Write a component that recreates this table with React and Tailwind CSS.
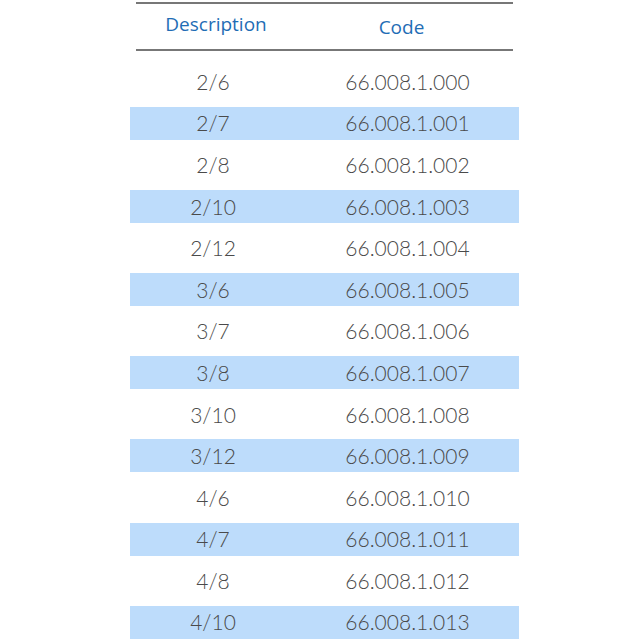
const ROWS = [
  ["2/6", "66.008.1.000"],
  ["2/7", "66.008.1.001"],
  ["2/8", "66.008.1.002"],
  ["2/10", "66.008.1.003"],
  ["2/12", "66.008.1.004"],
  ["3/6", "66.008.1.005"],
  ["3/7", "66.008.1.006"],
  ["3/8", "66.008.1.007"],
  ["3/10", "66.008.1.008"],
  ["3/12", "66.008.1.009"],
  ["4/6", "66.008.1.010"],
  ["4/7", "66.008.1.011"],
  ["4/8", "66.008.1.012"],
  ["4/10", "66.008.1.013"],
];

const App = () => {
  return (
    <div className="w-[640px] h-[640px] bg-white overflow-hidden pt-[2px]">
      <div className="ml-[130px] w-[389px]">
        {/* header */}
        <div className="mx-[6px] h-[49px] border-y-2 border-[#777] grid grid-cols-[160px_1fr] font-['Open_Sans',sans-serif] font-medium text-[19px] text-[#1f6db5]">
          <div className="flex justify-center pt-[6px]">Description</div>
          <div className="flex justify-center pt-[9px] pr-[6px]">Code</div>
        </div>

        {/* rows */}
        <div className="mt-[14px] flex flex-col gap-[8.6px] font-['Lato',sans-serif] font-light text-[21px] text-[#4a4a4a]">
          {ROWS.map(([desc, code], index) => (
            <div
              key={code}
              className={
                index % 2 === 1
                  ? "h-[33px] grid grid-cols-[166px_1fr] items-center bg-[#bddcfb]"
                  : "h-[33px] grid grid-cols-[166px_1fr] items-center"
              }
            >
              <div className="text-center">{desc}</div>
              <div className="text-center">{code}</div>
            </div>
          ))}
        </div>
      </div>
    </div>
  );
};

export default App;
